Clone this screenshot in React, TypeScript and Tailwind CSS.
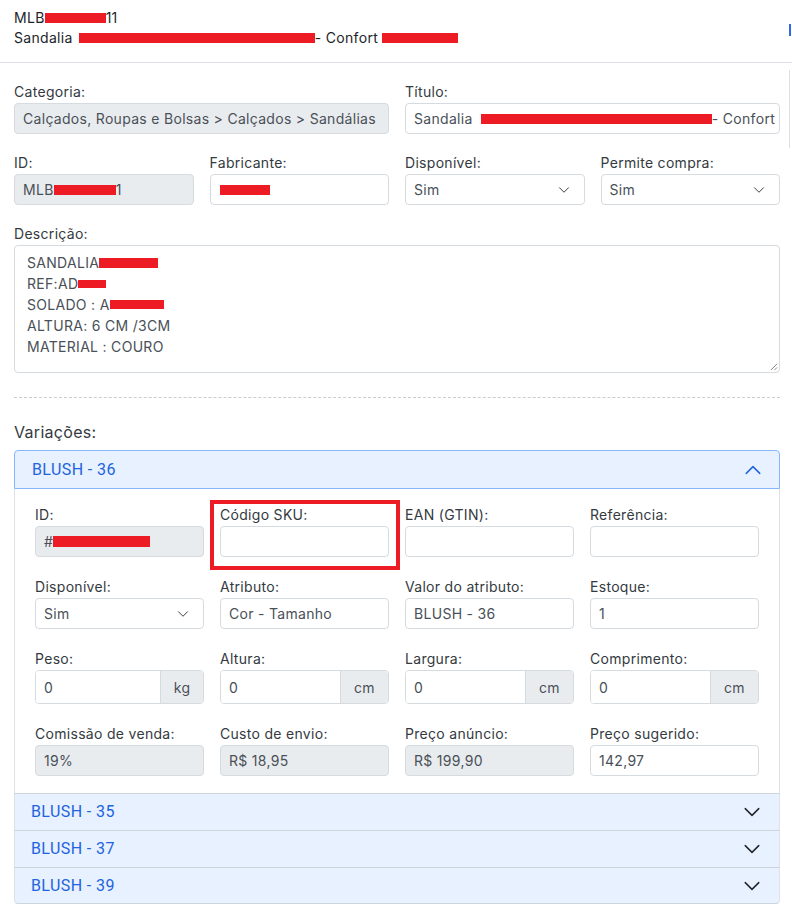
import React from "react";

// red blocks that hide private data in the original capture
function Redact({ className }: { className: string }) {
  return <span className={`inline-block bg-[#ed1c24] align-middle ${className}`} />;
}

function Label({ children }: { children: React.ReactNode }) {
  return <div className="leading-[21px] mb-[1px] text-[#343a40]">{children}</div>;
}

function Box({
  children,
  disabled,
  className = "",
}: {
  children?: React.ReactNode;
  disabled?: boolean;
  className?: string;
}) {
  return (
    <div
      className={`h-[31px] border border-[#d6dbe0] rounded-[4px] px-[8px] flex items-center whitespace-nowrap overflow-hidden text-[#495057] ${
        disabled ? "bg-[#e9ecef]" : "bg-white"
      } ${className}`}
    >
      {children}
    </div>
  );
}

function Chevron({ up, className = "" }: { up?: boolean; className?: string }) {
  return (
    <svg viewBox="0 0 16 16" className={className} fill="none" stroke="currentColor" strokeWidth="1.3" strokeLinecap="round" strokeLinejoin="round">
      {up ? <path d="M2 11 8 5l6 6" /> : <path d="M2 5l6 6 6-6" />}
    </svg>
  );
}

function Select({ value }: { value: string }) {
  return (
    <Box className="justify-between pr-[14px]">
      <span>{value}</span>
      <Chevron className="w-[12px] h-[12px] text-[#343a40]" />
    </Box>
  );
}

function Field({ label, children }: { label: React.ReactNode; children: React.ReactNode }) {
  return (
    <div>
      <Label>{label}</Label>
      {children}
    </div>
  );
}

function UnitInput({ value, unit, wide }: { value: string; unit: string; wide?: boolean }) {
  return (
    <div className="h-[34px] flex border border-[#d6dbe0] rounded-[4px] overflow-hidden text-[#495057]">
      <div className="flex-1 bg-white px-[8px] flex items-center">{value}</div>
      <div
        className={`bg-[#e9ecef] border-l border-[#d6dbe0] flex items-center justify-center ${
          wide ? "w-[48px]" : "w-[43px]"
        }`}
      >
        {unit}
      </div>
    </div>
  );
}

function CollapsedItem({ title, last }: { title: string; last?: boolean }) {
  return (
    <div
      className={`h-[37px] bg-[#e7f1ff] border-t border-[#cdd4dc] border-x border-x-[#dee2e6] pl-[16px] pr-[18px] flex items-center justify-between font-['Roboto',sans-serif] tracking-[0.4px] text-[16px] text-[#1e63e0] ${
        last ? "border-b border-b-[#cdd4dc] rounded-b-[4px]" : ""
      }`}
    >
      <span>{title}</span>
      <Chevron className="w-[18px] h-[18px] text-[#212529]" />
    </div>
  );
}

export default function App() {
  return (
    <div className="relative w-[792px] min-h-[914px] bg-white font-['Inter',sans-serif] tracking-[0.3px] text-[14px] text-[#212529] overflow-hidden">
      {/* modal header */}
      <div className="border-b border-[#dee2e6] pl-[14px] pt-[8px] pb-[14px] leading-[20px] h-[63px]">
        <div className="flex items-center">
          MLB
          <Redact className="w-[61px] h-[10px]" />
          11
        </div>
        <div className="flex items-center whitespace-pre">
          Sandalia <Redact className="w-[236px] h-[10px] ml-[2px]" />- Confort <Redact className="w-[76px] h-[10px]" />
        </div>
      </div>

      {/* bits of the page behind the modal */}
      <div className="absolute left-[789px] top-[70px] w-px h-[78px] bg-[#dcdfe3]" />
      <div className="absolute left-[789px] top-[24px] w-[3px] h-[12px] border-l-2 border-[#2f6be0]" />

      <div className="pl-[14px] pr-[12px] pt-[18px]">
        <div className="grid grid-cols-2 gap-x-[16px]">
          <Field label="Categoria:">
            <Box disabled>Calçados, Roupas e Bolsas &gt; Calçados &gt; Sandálias</Box>
          </Field>
          <Field label="Título:">
            <Box>
              <span className="whitespace-pre">Sandalia </span>
              <Redact className="w-[231px] h-[10px] ml-[4px] shrink-0" />
              <span className="whitespace-pre">- Confort</span>
            </Box>
          </Field>
        </div>

        <div className="grid grid-cols-4 gap-x-[16px] mt-[18px]">
          <Field label="ID:">
            <Box disabled>
              MLB
              <Redact className="w-[62px] h-[10px]" />1
            </Box>
          </Field>
          <Field label="Fabricante:">
            <Box>
              <Redact className="w-[50px] h-[10px] ml-[1px]" />
            </Box>
          </Field>
          <Field label="Disponível:">
            <Select value="Sim" />
          </Field>
          <Field label="Permite compra:">
            <Select value="Sim" />
          </Field>
        </div>

        <div className="mt-[18px]">
          <Label>Descrição:</Label>
          <div className="relative mt-[1px] h-[128px] border border-[#d6dbe0] rounded-[4px] px-[12px] pt-[6px] leading-[21px] text-[#495057]">
            <div className="flex items-center">
              SANDALIA
              <Redact className="w-[59px] h-[10px]" />
            </div>
            <div className="flex items-center">
              REF:AD
              <Redact className="w-[28px] h-[8px]" />
            </div>
            <div className="flex items-center whitespace-pre">
              SOLADO : A<Redact className="w-[54px] h-[9px]" />
            </div>
            <div>ALTURA: 6 CM /3CM</div>
            <div>MATERIAL : COURO</div>
            <svg viewBox="0 0 10 10" className="absolute right-[1px] bottom-[1px] w-[9px] h-[9px]" stroke="#777" strokeWidth="1">
              <path d="M9 2 2 9M9 6 6 9" />
            </svg>
          </div>
        </div>

        <div className="mt-[24px] border-t border-dashed border-[#c9cdd1]" />

        <div className="mt-[22px] text-[16px] leading-[24px] text-[#343a40]">Variações:</div>

        {/* accordion */}
        <div className="mt-[6px]">
          <div className="h-[39px] bg-[#e7f1ff] border border-[#86b7fe] rounded-t-[4px] pl-[17px] pr-[17px] flex items-center justify-between font-['Roboto',sans-serif] tracking-[0.4px] text-[16px] text-[#1e63e0]">
            <span>BLUSH - 36</span>
            <Chevron up className="w-[18px] h-[18px] text-[#1e63e0]" />
          </div>

          <div className="border-x border-[#dee2e6] px-[20px] pt-[15px] pb-[17px]">
            <div className="grid grid-cols-4 gap-x-[16px] gap-y-[19px]">
              <Field label="ID:">
                <Box disabled>
                  #<Redact className="w-[97px] h-[11px]" />
                </Box>
              </Field>
              <div className="relative">
                <div className="absolute left-[-10px] top-[-4px] w-[190px] h-[70px] border-[4px] border-[#ed1c24] pointer-events-none" />
                <Field label="Código SKU:">
                  <Box />
                </Field>
              </div>
              <Field label="EAN (GTIN):">
                <Box />
              </Field>
              <Field label="Referência:">
                <Box />
              </Field>

              <Field label="Disponível:">
                <Select value="Sim" />
              </Field>
              <Field label="Atributo:">
                <Box>Cor - Tamanho</Box>
              </Field>
              <Field label="Valor do atributo:">
                <Box>BLUSH - 36</Box>
              </Field>
              <Field label="Estoque:">
                <Box>1</Box>
              </Field>

              <Field label="Peso:">
                <UnitInput value="0" unit="kg" />
              </Field>
              <Field label="Altura:">
                <UnitInput value="0" unit="cm" wide />
              </Field>
              <Field label="Largura:">
                <UnitInput value="0" unit="cm" wide />
              </Field>
              <Field label="Comprimento:">
                <UnitInput value="0" unit="cm" wide />
              </Field>

              <Field label="Comissão de venda:">
                <Box disabled>19%</Box>
              </Field>
              <Field label="Custo de envio:">
                <Box disabled>R$ 18,95</Box>
              </Field>
              <Field label="Preço anúncio:">
                <Box disabled>R$ 199,90</Box>
              </Field>
              <Field label="Preço sugerido:">
                <Box>142,97</Box>
              </Field>
            </div>
          </div>

          <CollapsedItem title="BLUSH - 35" />
          <CollapsedItem title="BLUSH - 37" />
          <CollapsedItem title="BLUSH - 39" last />
        </div>
      </div>
    </div>
  );
}
